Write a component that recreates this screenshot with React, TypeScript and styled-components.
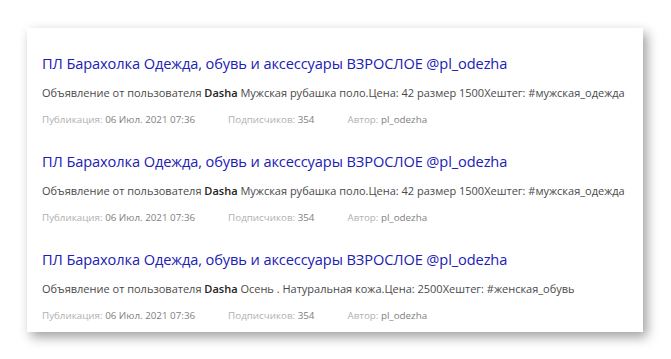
import styled, { createGlobalStyle } from "styled-components";

const Global = createGlobalStyle`
  html, body {
    margin: 0;
    padding: 0;
    background: #ffffff;
  }
  body {
    font-family: "Open Sans", "Liberation Sans", sans-serif;
  }
`;

const Page = styled.div`
  width: 671px;
  height: 359px;
  padding: 28px 0 0 27px;
  box-sizing: border-box;
`;

const Card = styled.div`
  width: 616px;
  height: 304px;
  background: #fff;
  box-shadow: 4px 5px 11px rgba(0, 0, 0, 0.38);
  padding: 24px 0 0 15px;
  box-sizing: border-box;
  display: flex;
  flex-direction: column;
  gap: 23px;
`;

const Post = styled.div`
  display: flex;
  flex-direction: column;
`;

const Title = styled.a`
  font-size: 14.6px;
  font-weight: 500;
  color: #2020b4;
  text-decoration: none;
  line-height: 22px;
  letter-spacing: -0.1px;
`;

const Desc = styled.p`
  margin: 11px 0 0;
  font-size: 11px;
  line-height: 16px;
  color: #4a4a4a;

  b {
    font-weight: 600;
    color: #222;
  }
`;

const Meta = styled.div`
  margin-top: 12px;
  display: flex;
  gap: 33px;
  font-size: 9.8px;
  line-height: 14px;
  color: #b0b0b0;

  span b {
    font-weight: 400;
    color: #808080;
  }
`;

interface PostData {
  user: string;
  text: string;
}

const posts: PostData[] = [
  { user: "Dasha", text: "Мужская рубашка поло.Цена: 42 размер 1500Хештег: #мужская_одежда" },
  { user: "Dasha", text: "Мужская рубашка поло.Цена: 42 размер 1500Хештег: #мужская_одежда" },
  { user: "Dasha", text: "Осень . Натуральная кожа.Цена: 2500Хештег: #женская_обувь" },
];

const App = () => {
  return (
    <>
      <Global />
      <Page>
        <Card>
          {posts.map((p, i) => (
            <Post key={i}>
              <Title href="#">ПЛ Барахолка Одежда, обувь и аксессуары ВЗРОСЛОЕ @pl_odezha</Title>
              <Desc>
                Объявление от пользователя <b>{p.user}</b> {p.text}
              </Desc>
              <Meta>
                <span>
                  Публикация: <b>06 Июл. 2021 07:36</b>
                </span>
                <span>
                  Подписчиков: <b>354</b>
                </span>
                <span>
                  Автор: <b>pl_odezha</b>
                </span>
              </Meta>
            </Post>
          ))}
        </Card>
      </Page>
    </>
  );
};

export default App;
